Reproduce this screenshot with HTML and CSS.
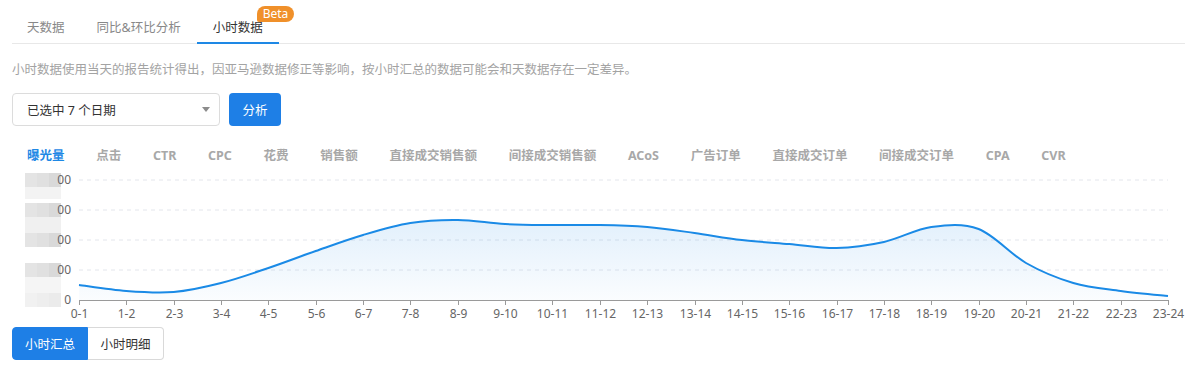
FILE: index.html
```html
<!DOCTYPE html>
<html lang="zh-CN">
<head>
    <meta charset="UTF-8">
    <meta name="viewport" content="width=device-width, initial-scale=1.0">
    <title>小时数据</title>
    <link rel="stylesheet" href="styles.css">
</head>
<body>
<div class="page">
    <div class="tabs">
        <div class="tab">天数据</div>
        <div class="tab">同比&amp;环比分析</div>
        <div class="tab active">小时数据<span class="badge">Beta</span></div>
    </div>

    <p class="notice">小时数据使用当天的报告统计得出，因亚马逊数据修正等影响，按小时汇总的数据可能会和天数据存在一定差异。</p>

    <div class="toolbar">
        <div class="select">
            <span>已选中 7 个日期</span>
            <i class="caret"></i>
        </div>
        <button class="btn primary">分析</button>
    </div>

    <ul class="metrics">
        <li class="active">曝光量</li>
        <li>点击</li>
        <li>CTR</li>
        <li>CPC</li>
        <li>花费</li>
        <li>销售额</li>
        <li>直接成交销售额</li>
        <li>间接成交销售额</li>
        <li>ACoS</li>
        <li>广告订单</li>
        <li>直接成交订单</li>
        <li>间接成交订单</li>
        <li>CPA</li>
        <li>CVR</li>
    </ul>

    <!-- 图表由下面的脚本生成 -->
    <svg id="chart" class="chart" width="1176" height="156" viewBox="0 0 1176 156"></svg>

    <div class="btn-group">
        <button class="seg active">小时汇总</button>
        <button class="seg">小时明细</button>
    </div>
</div>

<script>
    (function () {
        const NS = 'http://www.w3.org/2000/svg';
        const svg = document.getElementById('chart');
        // svg 左上角在页面 (12, 170)
        const ox = 12, oy = 170;
        const left = 79 - ox, right = 1168 - ox;
        const base = 301 - oy;
        const step = (right - left) / 23;

        // 曝光量 (折线位置, 页面 y 坐标)
        const values = [286, 292, 293, 284, 269, 252, 236, 224, 221, 225, 226, 226,
                        228, 234, 241, 245, 249, 243, 228, 230, 264, 284, 292, 297];

        function el(name, attrs, text) {
            const node = document.createElementNS(NS, name);
            for (const k in attrs) node.setAttribute(k, attrs[k]);
            if (text !== undefined) node.textContent = text;
            svg.appendChild(node);
            return node;
        }

        // 渐变
        const defs = el('defs', {});
        const grad = document.createElementNS(NS, 'linearGradient');
        grad.setAttribute('id', 'areaFill');
        grad.setAttribute('x1', '0'); grad.setAttribute('y1', '0');
        grad.setAttribute('x2', '0'); grad.setAttribute('y2', '1');
        grad.innerHTML = '<stop offset="0" stop-color="#1e88e5" stop-opacity="0.13"/>' +
                         '<stop offset="1" stop-color="#1e88e5" stop-opacity="0.02"/>';
        defs.appendChild(grad);

        // 网格线 + Y 轴标签 (数值被打码)
        for (let i = 0; i < 5; i++) {
            const y = base - i * 30;
            if (i > 0) {
                el('line', { x1: left, y1: y, x2: right, y2: y, class: 'grid' });
            }
            const light = i === 0;
            el('rect', { x: 25 - ox, y: y - 7, width: 12, height: 14, fill: light ? '#f1f1f1' : '#e4e4e4' });
            el('rect', { x: 37 - ox, y: y - 7, width: 12, height: 14, fill: light ? '#eeeeee' : '#e0e0e0' });
            el('rect', { x: 49 - ox, y: y - 7, width: 12, height: 14, fill: light ? '#ebebeb' : '#d9d9d9' });
            el('text', { x: 71 - ox, y: y + 4, class: 'ylabel' }, i === 0 ? '0' : '00');
        }
        el('rect', { x: 25 - ox, y: 188 - oy, width: 36, height: 12, fill: '#f3f3f3' });
        el('rect', { x: 25 - ox, y: 218 - oy, width: 36, height: 16, fill: '#f0f0f0' });
        el('rect', { x: 25 - ox, y: 278 - oy, width: 36, height: 16, fill: '#f5f5f5' });

        // 折线 (Catmull-Rom 平滑)
        const pts = values.map((v, i) => [left + i * step, v - oy]);
        let d = 'M' + pts[0][0] + ',' + pts[0][1];
        for (let i = 0; i < pts.length - 1; i++) {
            const p0 = pts[i - 1] || pts[i];
            const p1 = pts[i];
            const p2 = pts[i + 1];
            const p3 = pts[i + 2] || p2;
            const c1x = p1[0] + (p2[0] - p0[0]) / 6;
            const c1y = p1[1] + (p2[1] - p0[1]) / 6;
            const c2x = p2[0] - (p3[0] - p1[0]) / 6;
            const c2y = p2[1] - (p3[1] - p1[1]) / 6;
            d += ' C' + c1x.toFixed(1) + ',' + c1y.toFixed(1) + ' ' +
                 c2x.toFixed(1) + ',' + c2y.toFixed(1) + ' ' +
                 p2[0].toFixed(1) + ',' + p2[1].toFixed(1);
        }
        el('path', { d: d + ' L' + right + ',' + base + ' L' + left + ',' + base + ' Z', fill: 'url(#areaFill)' });
        el('path', { d: d, class: 'line' });

        // X 轴
        el('line', { x1: left, y1: base + 0.5, x2: right, y2: base + 0.5, class: 'axis' });
        for (let i = 0; i < 24; i++) {
            const x = Math.round(left + i * step) + 0.5;
            el('line', { x1: x, y1: base, x2: x, y2: base + 5, class: 'axis' });
            el('text', { x: x, y: base + 18, class: 'xlabel' }, i + '-' + (i + 1));
        }
    })();
</script>
</body>
</html>
```

FILE: styles.css
```css
* {
    box-sizing: border-box;
}
body {
    margin: 0;
    background: #fff;
    font-family: "Noto Sans", "Noto Sans CJK SC", sans-serif;
    font-size: 12.5px;
    color: #333;
}
.page {
    padding: 0 15px 0 12px;
}

/* 顶部标签页 */
.tabs {
    display: flex;
    border-bottom: 1px solid #e8e8e8;
    height: 44px;
}
.tab {
    position: relative;
    padding: 19px 16px 0;
    line-height: 17px;
    color: #888;
}
.tab:first-child {
    margin-left: -1px;
}
.tab.active {
    color: #333;
    border-bottom: 2px solid #1e88e5;
    margin-bottom: -1px;
}
.badge {
    position: absolute;
    left: 60px;
    top: 6px;
    height: 16px;
    padding: 0 6px;
    border-radius: 8px 8px 8px 2px;
    background: #f0902a;
    color: #fff;
    font-size: 12px;
    line-height: 16px;
}

.notice {
    margin: 17px 0 0;
    line-height: 18px;
    color: #a3a3a3;
}

/* 日期选择 */
.toolbar {
    display: flex;
    gap: 9px;
    margin-top: 14px;
}
.select {
    display: flex;
    align-items: center;
    justify-content: space-between;
    width: 208px;
    height: 33px;
    padding: 0 9px 0 14px;
    border: 1px solid #dcdcdc;
    border-radius: 4px;
    color: #333;
}
.caret {
    width: 0;
    height: 0;
    border-left: 4px solid transparent;
    border-right: 4px solid transparent;
    border-top: 5px solid #8c8c8c;
}
.btn {
    font-family: inherit;
    font-size: 12.5px;
    border: none;
    cursor: pointer;
}
.btn.primary {
    width: 52px;
    height: 33px;
    border-radius: 4px;
    background: #1e7fe6;
    color: #fff;
}

/* 指标切换 */
.metrics {
    display: flex;
    gap: 31.7px;
    list-style: none;
    margin: 20px 0 0;
    padding: 0 0 0 15px;
    line-height: 20px;
    font-weight: bold;
    color: #a8a8a8;
}
.metrics li.active {
    color: #1e88e5;
}

/* 图表 */
.chart {
    display: block;
    margin-top: 3px;
}
.chart .grid {
    stroke: #e3e6ec;
    stroke-width: 1;
    stroke-dasharray: 4 4;
}
.chart .axis {
    stroke: #9a9a9a;
    stroke-width: 1;
}
.chart .line {
    fill: none;
    stroke: #1a8ae6;
    stroke-width: 2;
}
.chart .ylabel {
    font-size: 12px;
    fill: #666;
    text-anchor: end;
}
.chart .xlabel {
    font-size: 12px;
    fill: #666;
    text-anchor: middle;
}

/* 底部切换 */
.btn-group {
    display: flex;
    margin-top: 2px;
}
.seg {
    width: 76px;
    height: 33px;
    font-family: inherit;
    font-size: 12.5px;
    background: #fff;
    color: #333;
    border: 1px solid #d9d9d9;
    cursor: pointer;
}
.seg:first-child {
    border-radius: 4px 0 0 4px;
}
.seg:last-child {
    border-left: none;
    border-radius: 0 4px 4px 0;
}
.seg.active {
    background: #1e7fe6;
    border-color: #1e7fe6;
    color: #fff;
}
```
